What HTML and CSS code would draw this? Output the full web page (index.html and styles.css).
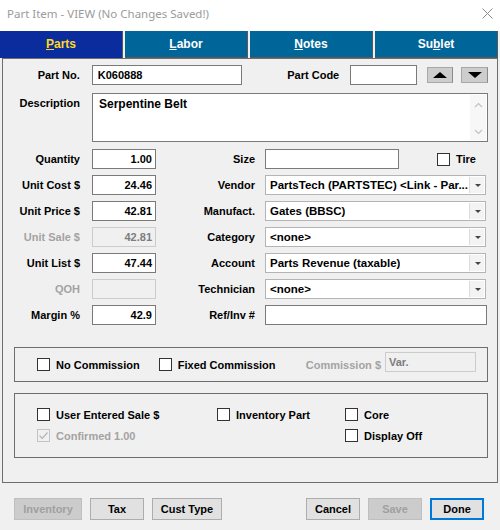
FILE: index.html
```html
<!DOCTYPE html>
<html>
    <head>
        <link rel="stylesheet" href="styles.css">
    </head>
    <body>
        <div class="titlebar">
            <span class="title">Part Item - VIEW (No Changes Saved!)</span>
            <svg class="close" width="11" height="11" viewBox="0 0 11 11">
                <path d="M0.5 0.5 L10.5 10.5 M10.5 0.5 L0.5 10.5" stroke="#8a8a8a" stroke-width="1" fill="none"/>
            </svg>
        </div>

        <div class="tabs">
            <div class="tab active"><u>P</u>arts</div>
            <div class="tab"><u>L</u>abor</div>
            <div class="tab"><u>N</u>otes</div>
            <div class="tab">Su<u>b</u>let</div>
        </div>

        <div class="panel">
            <div class="topRow">
                <span class="lbl first">Part No.</span>
                <div class="field partNo">K060888</div>
                <span class="lbl codeLbl">Part Code</span>
                <div class="field partCode"></div>
                <div class="arrowBtn up"><span class="triUp"></span></div>
                <div class="arrowBtn down"><span class="triDown"></span></div>
            </div>

            <div class="descRow">
                <span class="lbl first descLbl">Description</span>
                <div class="field desc">
                    <span class="descText">Serpentine Belt</span>
                    <div class="scroll">
                        <svg width="9" height="6" viewBox="0 0 9 6"><path d="M1 5 L4.5 1.5 L8 5" stroke="#c2c2c2" stroke-width="1.2" fill="none"/></svg>
                        <svg width="9" height="6" viewBox="0 0 9 6"><path d="M1 1 L4.5 4.5 L8 1" stroke="#c2c2c2" stroke-width="1.2" fill="none"/></svg>
                    </div>
                </div>
            </div>

            <div class="grid">
                <span class="lbl">Quantity</span>
                <div class="field num">1.00</div>
                <span class="lbl">Size</span>
                <div class="sizeCell">
                    <div class="field size"></div>
                    <span class="check tire"><span class="box"></span>Tire</span>
                </div>

                <span class="lbl">Unit Cost $</span>
                <div class="field num">24.46</div>
                <span class="lbl">Vendor</span>
                <div class="combo"><span class="comboText">PartsTech (PARTSTEC) &lt;Link - Par...</span><span class="drop"></span></div>

                <span class="lbl">Unit Price $</span>
                <div class="field num">42.81</div>
                <span class="lbl">Manufact.</span>
                <div class="combo"><span class="comboText">Gates (BBSC)</span><span class="drop"></span></div>

                <span class="lbl off">Unit Sale $</span>
                <div class="field num disabled">42.81</div>
                <span class="lbl">Category</span>
                <div class="combo"><span class="comboText">&lt;none&gt;</span><span class="drop"></span></div>

                <span class="lbl">Unit List $</span>
                <div class="field num">47.44</div>
                <span class="lbl">Account</span>
                <div class="combo"><span class="comboText">Parts Revenue (taxable)</span><span class="drop"></span></div>

                <span class="lbl off">QOH</span>
                <div class="field num disabled"></div>
                <span class="lbl">Technician</span>
                <div class="combo"><span class="comboText">&lt;none&gt;</span><span class="drop"></span></div>

                <span class="lbl">Margin %</span>
                <div class="field num">42.9</div>
                <span class="lbl">Ref/Inv #</span>
                <div class="field"></div>
            </div>

            <div class="group commission">
                <span class="check"><span class="box"></span>No Commission</span>
                <span class="check fixed"><span class="box"></span>Fixed Commission</span>
                <span class="lbl off commLbl">Commission $</span>
                <div class="field disabled commField">Var.</div>
            </div>

            <div class="group options">
                <span class="check"><span class="box"></span>User Entered Sale $</span>
                <span class="check"><span class="box"></span>Inventory Part</span>
                <span class="check"><span class="box"></span>Core</span>
                <span class="check off"><span class="box ticked">
                    <svg width="11" height="11" viewBox="0 0 11 11"><path d="M1.5 5.5 L4.2 8.3 L9.5 2.5" stroke="#b4b4b4" stroke-width="1.2" fill="none"/></svg>
                </span>Confirmed 1.00</span>
                <span></span>
                <span class="check"><span class="box"></span>Display Off</span>
            </div>
        </div>

        <div class="buttons">
            <div class="btn disabled wide">Inventory</div>
            <div class="btn">Tax</div>
            <div class="btn cust">Cust Type</div>
            <div class="spacer"></div>
            <div class="btn">Cancel</div>
            <div class="btn disabled">Save</div>
            <div class="btn default">Done</div>
        </div>
    </body>
</html>
```

FILE: styles.css
```css
*{
    box-sizing:border-box;
}

body{
    margin:0px;
    padding:0px;
    width:500px;
    height:530px;
    background-color:#f0f0f0;
    font-family:"Liberation Sans", Arial, sans-serif;
    font-size:11px;
    font-weight:bold;
    color:black;
    overflow:hidden;
}

.titlebar{
    height:31px;
    background-color:white;
    display:flex;
    align-items:center;
    justify-content:space-between;
    padding:0px 7px 5px 7px;
}

.title{
    font-family:"Noto Sans", sans-serif;
    font-weight:normal;
    font-size:11.5px;
    color:#9b9b9b;
}

.close{
    margin-top:1px;
}

.tabs{
    display:flex;
    gap:2px;
    height:27px;
    padding-right:2px;
}

.tab{
    flex:1;
    background-color:#006599;
    color:white;
    font-size:12px;
    display:flex;
    align-items:center;
    justify-content:center;
    border-right:1px solid #5a5a5a;
    border-bottom:1px solid #5a5a5a;
    padding-bottom:1px;
}

.tab.active{
    background-color:#0a2c9c;
    color:#ffd81f;
    border-bottom:none;
}

.panel{
    margin:0px 2px 0px 2px;
    border:1px solid #6e6e6e;
    padding:6px 9px 24px 0px;
}

.lbl{
    text-align:right;
    padding-right:10px;
    white-space:nowrap;
}

.lbl.first{
    width:89px;
    padding-right:12px;
}

.lbl.off{
    color:#a3a3a3;
}

.field{
    height:20px;
    background-color:white;
    border:1px solid #7a7a7a;
    padding:0px 5px;
    display:flex;
    align-items:center;
    white-space:nowrap;
    overflow:hidden;
}

.field.num{
    justify-content:flex-end;
    padding-right:3px;
}

.field.disabled{
    background-color:#f0f0f0;
    border-color:#cccccc;
    color:#7d7d7d;
}

.topRow{
    display:flex;
    align-items:center;
    height:20px;
}

.partNo{
    width:151px;
}

.codeLbl{
    width:108px;
    padding-right:11px;
}

.partCode{
    width:67px;
}

.arrowBtn{
    width:26px;
    height:16px;
    background-color:#cdcdcd;
    border:1px solid #a8a8a8;
    border-right-color:#8a8a8a;
    display:flex;
    align-items:center;
    justify-content:center;
}

.arrowBtn.up{
    margin-left:10px;
}

.arrowBtn.down{
    margin-left:8px;
    width:27px;
}

.triUp{
    width:0px;
    height:0px;
    border-left:7px solid transparent;
    border-right:7px solid transparent;
    border-bottom:6px solid black;
}

.triDown{
    width:0px;
    height:0px;
    border-left:7px solid transparent;
    border-right:7px solid transparent;
    border-top:6px solid black;
}

.descRow{
    display:flex;
    margin-top:8px;
}

.descLbl{
    padding-top:4px;
}

.field.desc{
    width:396px;
    height:49px;
    align-items:flex-start;
    justify-content:space-between;
    padding:1px 1px 1px 6px;
    font-size:12px;
}

.descText{
    padding-top:2px;
}

.scroll{
    width:16px;
    height:45px;
    background-color:#f7f7f7;
    display:flex;
    flex-direction:column;
    justify-content:space-between;
    align-items:center;
    padding:7px 0px 5px 0px;
}

.grid{
    display:grid;
    grid-template-columns:89px 64px 109px 222px;
    grid-auto-rows:20px;
    row-gap:6px;
    margin-top:7px;
    align-items:center;
}

.grid .lbl:nth-child(4n+1){
    padding-right:12px;
}

.sizeCell{
    display:flex;
    align-items:center;
    height:20px;
}

.field.size{
    width:134px;
}

.check{
    display:flex;
    align-items:center;
    gap:6px;
    white-space:nowrap;
}

.check.off{
    color:#a3a3a3;
}

.box{
    width:13px;
    height:13px;
    background-color:white;
    border:1px solid #333333;
    display:flex;
    align-items:center;
    justify-content:center;
}

.box.ticked{
    border-color:#c4c4c4;
    background-color:#f0f0f0;
}

.tire{
    margin-left:38px;
}

.combo{
    height:20px;
    background-color:white;
    border:1px solid #b4b4b4;
    display:flex;
    align-items:center;
    justify-content:space-between;
    padding:1px 1px 1px 4px;
    font-size:11.5px;
    width:221px;
}

.comboText{
    white-space:nowrap;
    overflow:hidden;
}

.drop{
    width:15px;
    height:16px;
    background-color:#f3f3f3;
    border-left:1px solid #dcdcdc;
    position:relative;
}

.drop::after{
    content:"";
    position:absolute;
    left:5px;
    top:7px;
    border-left:3px solid transparent;
    border-right:3px solid transparent;
    border-top:3px solid #444444;
}

.group{
    margin-left:11px;
    border:1px solid #6e6e6e;
}

.commission{
    margin-top:22px;
    height:35px;
    display:flex;
    align-items:center;
    padding:0px 11px 0px 22px;
}

.fixed{
    margin-left:19px;
}

.commLbl{
    margin-left:auto;
    padding-right:4px;
}

.commField{
    width:91px;
    margin-top:-5px;
    padding-left:3px;
}

.options{
    margin-top:11px;
    height:65px;
    display:grid;
    grid-template-columns:180px 128px auto;
    grid-auto-rows:13px;
    row-gap:8px;
    padding:14px 0px 0px 22px;
}

.buttons{
    display:flex;
    gap:8px;
    margin-top:15px;
    padding:0px 16px 0px 14px;
}

.spacer{
    flex:1;
}

.btn{
    width:54px;
    height:22px;
    background-color:#e1e1e1;
    border:1px solid #adadad;
    display:flex;
    align-items:center;
    justify-content:center;
}

.btn.wide{
    width:68px;
}

.btn.cust{
    width:70px;
}

.btn.disabled{
    background-color:#cccccc;
    border-color:#bfbfbf;
    color:#a0a0a0;
}

.btn.default{
    border:2px solid #0078d7;
}
```
